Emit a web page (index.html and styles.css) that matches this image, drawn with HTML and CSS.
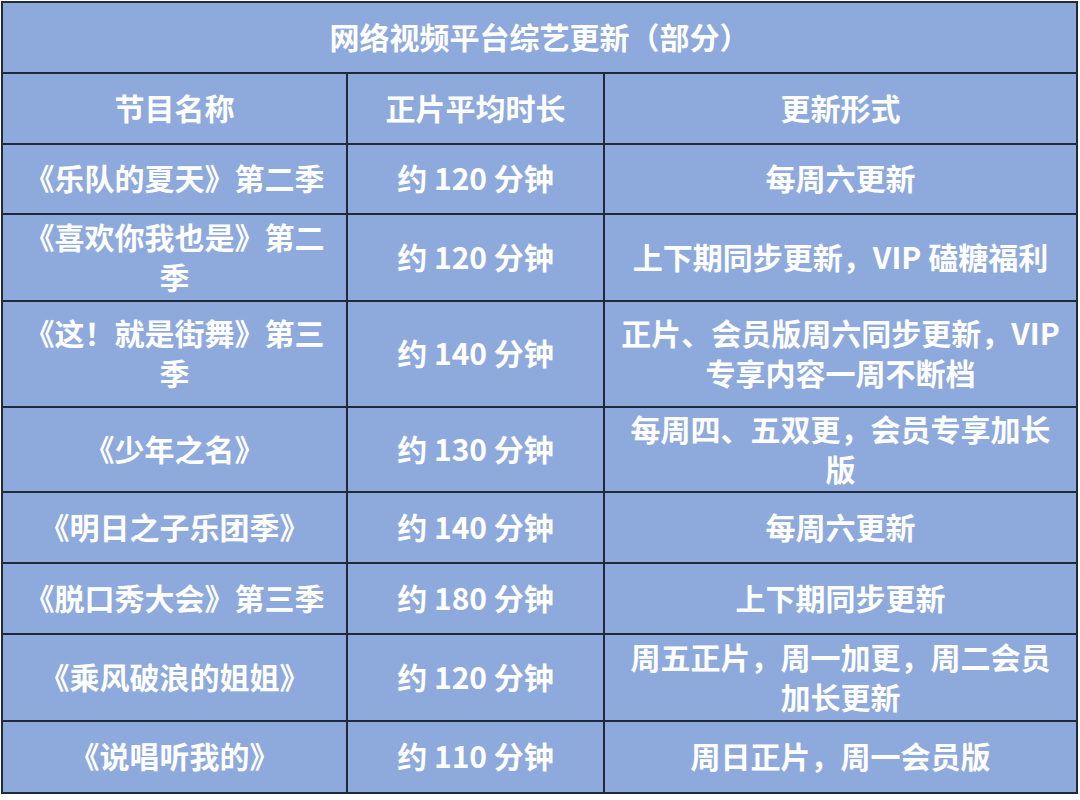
FILE: index.html
```html
<!DOCTYPE html>
<html lang="zh-CN">
<head>
<meta charset="utf-8">
<link rel="stylesheet" href="styles.css">
</head>
<body>
<div class="sheet">
  <div class="cell title">网络视频平台综艺更新（部分）</div>
  <div class="cell">节目名称</div>
  <div class="cell">正片平均时长</div>
  <div class="cell">更新形式</div>

  <div class="cell">《乐队的夏天》第二季</div>
  <div class="cell">约 120 分钟</div>
  <div class="cell">每周六更新</div>

  <div class="cell">《喜欢你我也是》第二<br>季</div>
  <div class="cell">约 120 分钟</div>
  <div class="cell">上下期同步更新，VIP 磕糖福利</div>

  <div class="cell">《这！就是街舞》第三<br>季</div>
  <div class="cell">约 140 分钟</div>
  <div class="cell">正片、会员版周六同步更新，VIP<br>专享内容一周不断档</div>

  <div class="cell">《少年之名》</div>
  <div class="cell">约 130 分钟</div>
  <div class="cell">每周四、五双更，会员专享加长<br>版</div>

  <div class="cell">《明日之子乐团季》</div>
  <div class="cell">约 140 分钟</div>
  <div class="cell">每周六更新</div>

  <div class="cell">《脱口秀大会》第三季</div>
  <div class="cell">约 180 分钟</div>
  <div class="cell">上下期同步更新</div>

  <div class="cell">《乘风破浪的姐姐》</div>
  <div class="cell">约 120 分钟</div>
  <div class="cell">周五正片，周一加更，周二会员<br>加长更新</div>

  <div class="cell">《说唱听我的》</div>
  <div class="cell">约 110 分钟</div>
  <div class="cell">周日正片，周一会员版</div>
</div>
</body>
</html>
```

FILE: styles.css
```css
html, body {
  margin: 0;
  padding: 0;
  background: #ffffff;
}

body {
  padding: 1px 0 0 1px;
  font-family: "Noto Sans CJK SC", "Noto Sans", sans-serif;
}

.sheet {
  display: grid;
  width: max-content;
  grid-template-columns: 343px 255px 471px;
  grid-template-rows: 69px 69px 68px 85px 104px 83px 69px 69px 85px 70px;
  gap: 2px;
  padding: 2px;
  background: #1f2b3b;
}

.cell {
  background: #8eaadc;
  color: #ffffff;
  font-size: 30px;
  font-weight: 700;
  line-height: 40px;
  text-align: center;
  display: flex;
  align-items: center;
  justify-content: center;
  padding-bottom: 4px;
}

.title {
  grid-column: 1 / 4;
}
```
